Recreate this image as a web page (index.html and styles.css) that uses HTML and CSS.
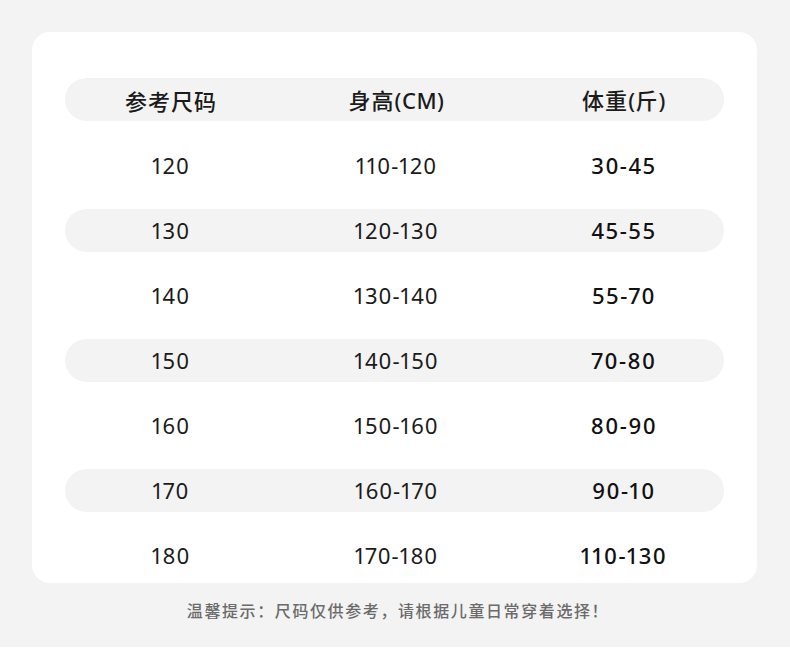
FILE: index.html
```html
<!DOCTYPE html>
<html lang="zh-CN">
<head>
<meta charset="utf-8">
<link rel="stylesheet" href="styles.css">
</head>
<body>
<div class="page">
  <div class="card">
    <div class="row head">
      <div class="c1">参考尺码</div>
      <div class="c2">身高<span class="lat">(CM)</span></div>
      <div class="c3">体重<span class="lat">(</span>斤<span class="lat">)</span></div>
    </div>
    <div class="row"><div class="c1">120</div><div class="c2">110-120</div><div class="c3 b">30-45</div></div>
    <div class="row alt"><div class="c1">130</div><div class="c2">120-130</div><div class="c3 b">45-55</div></div>
    <div class="row"><div class="c1">140</div><div class="c2">130-140</div><div class="c3 b">55-70</div></div>
    <div class="row alt"><div class="c1">150</div><div class="c2">140-150</div><div class="c3 b">70-80</div></div>
    <div class="row"><div class="c1">160</div><div class="c2">150-160</div><div class="c3 b">80-90</div></div>
    <div class="row alt"><div class="c1">170</div><div class="c2">160-170</div><div class="c3 b">90-10</div></div>
    <div class="row"><div class="c1">180</div><div class="c2">170-180</div><div class="c3 b">110-130</div></div>
  </div>
  <p class="note">温馨提示：尺码仅供参考，请根据儿童日常穿着选择！</p>
</div>
</body>
</html>
```
FILE: styles.css
```css
html, body {
  margin: 0;
  padding: 0;
  background: #ffffff;
}
.page {
  background: #f3f3f3;
  height: 647px;
  box-sizing: border-box;
  padding: 32px 33px 0 32px;
  font-family: "Noto Sans", "Open Sans", "Noto Sans CJK SC", sans-serif;
  color: #1b1b1b;
}
.card {
  background: #ffffff;
  border-radius: 18px;
  height: 551px;
  box-sizing: border-box;
  padding: 46px 33px 0 33px;
  display: flex;
  flex-direction: column;
  gap: 22px;
}
.row {
  height: 43px;
  border-radius: 22px;
  display: grid;
  grid-template-columns: 212px 239px 1fr;
  align-items: center;
  font-size: 22px;
  line-height: 43px;
  font-variant-numeric: proportional-nums;
  letter-spacing: 1px;
}
.row > div {
  text-align: center;
}
.row .c3 {
  padding-left: 8px;
}
.head {
  background: #f3f3f3;
  margin-bottom: 1px;
  font-family: "Noto Sans CJK SC", sans-serif;
  font-weight: 500;
  letter-spacing: 1px;
}
.head .lat {
  font-family: "Noto Sans", "Open Sans", sans-serif;
  font-weight: 500;
  letter-spacing: 0.5px;
}
.alt {
  background: #f3f3f3;
}
.b {
  font-weight: 500;
  letter-spacing: 1.5px;
  color: #111111;
}
.note {
  margin: 15px 0 0 0;
  padding-left: 7px;
  text-align: center;
  font-family: "Noto Sans CJK SC", sans-serif;
  font-size: 16px;
  line-height: 24px;
  letter-spacing: 1.6px;
  font-weight: 500;
  color: #6b6b6b;
}
```
